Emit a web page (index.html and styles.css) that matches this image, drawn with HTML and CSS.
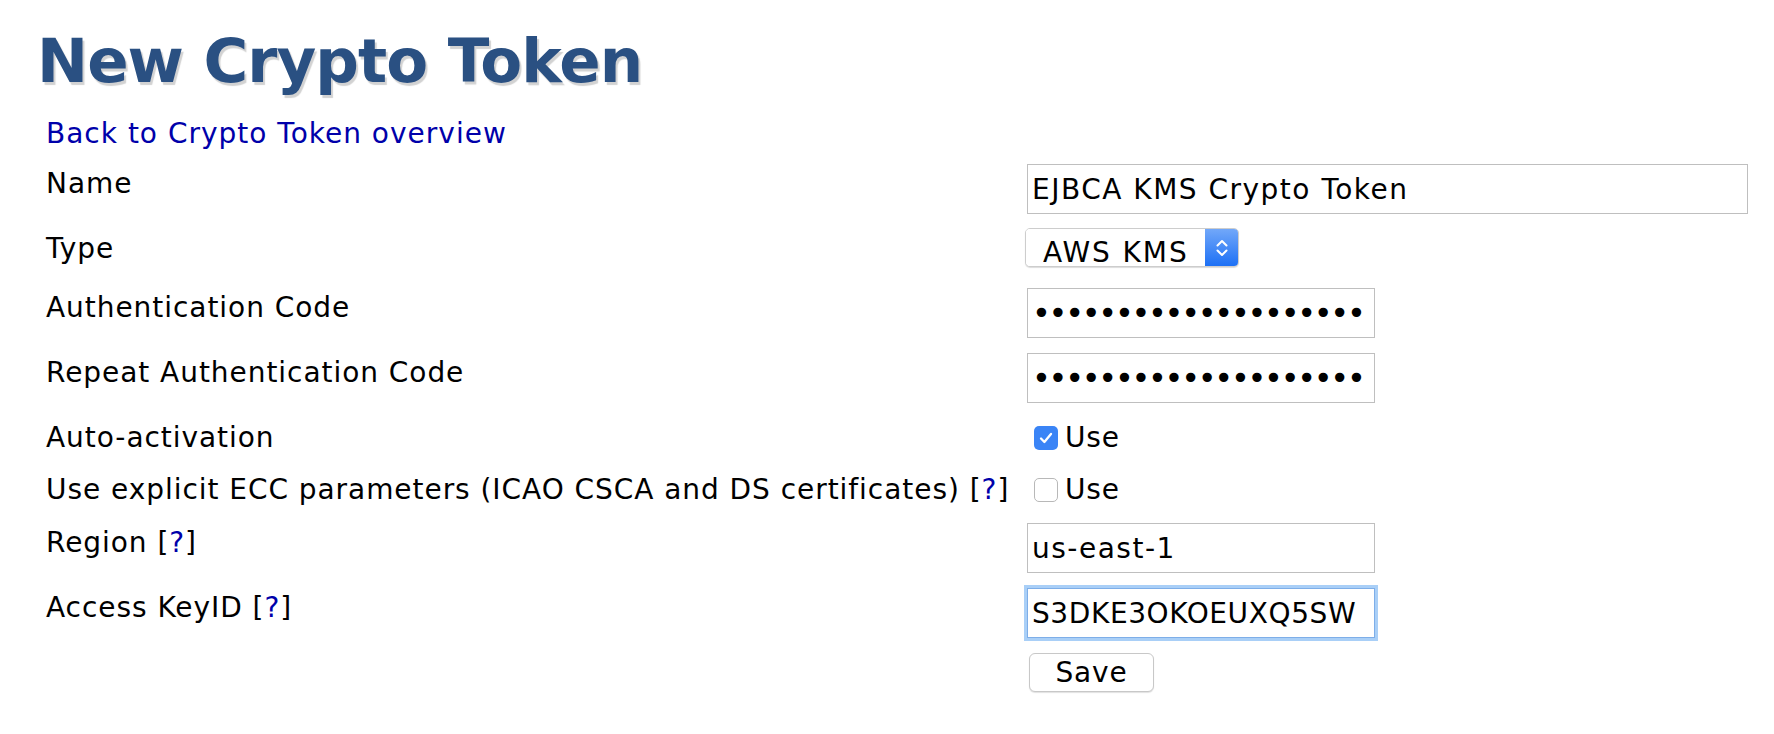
FILE: index.html
```html
<!DOCTYPE html>
<html lang="en">
<head>
<meta charset="utf-8">
<title>New Crypto Token</title>
<link rel="stylesheet" href="styles.css">
</head>
<body>
<div class="page">
  <h1 class="title">New Crypto Token</h1>
  <div class="content">
    <a class="back" href="#">Back to Crypto Token overview</a>
    <form class="form">
      <div class="row row-name">
        <div class="label">Name</div>
        <div class="field"><input class="text wide" type="text" value="EJBCA KMS Crypto Token"></div>
      </div>
      <div class="row row-select">
        <div class="label label-select">Type</div>
        <div class="field">
          <div class="select">
            <select class="select-input"><option>AWS KMS</option></select>
            <span class="select-arrow">
              <svg width="14" height="24" viewBox="0 0 14 24" aria-hidden="true"><path d="M2.5 9.5 L7 5 L11.5 9.5 M2.5 14.5 L7 19 L11.5 14.5" fill="none" stroke="#fff" stroke-width="2" stroke-linecap="round" stroke-linejoin="round"/></svg>
            </span>
          </div>
        </div>
      </div>
      <div class="row">
        <div class="label">Authentication Code</div>
        <div class="field"><input class="text short pass" type="password" value="foo123foo123foo123fo"></div>
      </div>
      <div class="row">
        <div class="label">Repeat Authentication Code</div>
        <div class="field"><input class="text short pass" type="password" value="foo123foo123foo123fo"></div>
      </div>
      <div class="row row-check">
        <div class="label">Auto-activation</div>
        <div class="field check">
          <span class="box on"><svg width="24" height="24" viewBox="0 0 24 24" aria-hidden="true"><path d="M7 12.5 L10.4 16 L17 8" fill="none" stroke="#fff" stroke-width="2.3" stroke-linecap="round" stroke-linejoin="round"/></svg></span>
          <span>Use</span>
        </div>
      </div>
      <div class="row row-check2">
        <div class="label">Use explicit ECC parameters (ICAO CSCA and DS certificates) [<a class="help" href="#">?</a>]</div>
        <div class="field check">
          <span class="box off"></span>
          <span>Use</span>
        </div>
      </div>
      <div class="row">
        <div class="label">Region [<a class="help" href="#">?</a>]</div>
        <div class="field"><input class="text short" type="text" value="us-east-1"></div>
      </div>
      <div class="row">
        <div class="label">Access KeyID [<a class="help" href="#">?</a>]</div>
        <div class="field"><input class="text short focused" type="text" value="S3DKE3OKOEUXQ5SW"></div>
      </div>
      <div class="row row-last">
        <div class="label"></div>
        <div class="field"><button class="btn" type="button">Save</button></div>
      </div>
    </form>
  </div>
</div>
</body>
</html>
```

FILE: styles.css
```css
html, body {
  margin: 0;
  padding: 0;
  background: #ffffff;
}

body {
  font-family: "DejaVu Sans", Verdana, sans-serif;
  font-size: 28px;
  color: #000000;
}

.page {
  padding: 25px 0 0 35px;
}

.title {
  margin: 0 0 0 2px;
  font-family: "DejaVu Sans", Verdana, sans-serif;
  font-size: 61px;
  font-weight: bold;
  line-height: 71px;
  letter-spacing: -0.9px;
  color: #2a5082;
  text-shadow: 2px 3px 1px #d2d2d2;
}

.content {
  padding-left: 11px;
}

.back {
  display: block;
  margin-top: 21px;
  font-size: 28px;
  line-height: 33px;
  letter-spacing: 1px;
  color: #0000aa;
  text-decoration: none;
}

.form {
  margin: 14px 0 0 0;
}

.row {
  display: grid;
  grid-template-columns: 981px auto;
  align-items: start;
  padding-bottom: 15px;
}

.row-name {
  padding-bottom: 14px;
}

.row-select {
  padding-bottom: 21px;
}

.row-check {
  padding-bottom: 16px;
}

.row-check2 {
  padding-bottom: 17px;
}

.row-last {
  padding-bottom: 20px;
}

.label {
  padding-top: 3px;
  line-height: 33px;
  letter-spacing: 0.95px;
  white-space: nowrap;
}

.label-select {
  padding-top: 4px;
}

.help {
  color: #0000aa;
  text-decoration: none;
}

.field {
  display: flex;
  align-items: flex-start;
}

.text {
  display: block;
  box-sizing: border-box;
  height: 50px;
  margin: 0;
  padding: 0 4px;
  border: 1px solid #bfbfbf;
  border-radius: 0;
  background: #ffffff;
  font-family: "DejaVu Sans", Verdana, sans-serif;
  font-size: 28px;
  letter-spacing: 1.5px;
  color: #000000;
  outline: none;
}

.wide {
  width: 721px;
}

.short {
  width: 348px;
}

.pass {
  font-size: 32px;
  letter-spacing: -2.3px;
}

.focused {
  border-color: #7eaee8;
  box-shadow: 0 0 0 3px #a9cff7;
  letter-spacing: 0.6px;
}

.select {
  display: flex;
  box-sizing: border-box;
  width: 214px;
  height: 39px;
  margin-left: -2px;
  border: 1px solid #cdcdcd;
  border-radius: 5px;
  overflow: hidden;
  background: #ffffff;
  box-shadow: 0 1px 1px rgba(0, 0, 0, 0.14);
}

.select-input {
  flex: 1;
  min-width: 0;
  height: 100%;
  margin: 0;
  padding: 7px 0 0 17px;
  border: 0;
  background: #ffffff;
  -webkit-appearance: none;
  appearance: none;
  font-family: "DejaVu Sans", Verdana, sans-serif;
  font-size: 28px;
  letter-spacing: 1.9px;
  color: #000000;
  outline: none;
}

.select-arrow {
  display: flex;
  align-items: center;
  justify-content: center;
  width: 33px;
  background: linear-gradient(#72a8f9, #1d70f5);
}

.check {
  align-items: center;
  gap: 7px;
  height: 33px;
  padding: 3px 0 0 7px;
  line-height: 33px;
  letter-spacing: 0.8px;
}

.box {
  display: flex;
  flex: none;
  box-sizing: border-box;
  width: 24px;
  height: 24px;
  border-radius: 5px;
}

.box.on {
  background: #3a84f6;
}

.box.off {
  border: 1px solid #b8b8b8;
  background: #ffffff;
}

.btn {
  box-sizing: border-box;
  width: 125px;
  height: 39px;
  margin: 0 0 0 2px;
  padding: 0;
  border: 1px solid #c8c8c8;
  border-radius: 6px;
  background: #ffffff;
  box-shadow: 0 1px 1px rgba(0, 0, 0, 0.12);
  font-family: "DejaVu Sans", Verdana, sans-serif;
  font-size: 28px;
  line-height: 33px;
  letter-spacing: 0.8px;
  color: #000000;
}
```
